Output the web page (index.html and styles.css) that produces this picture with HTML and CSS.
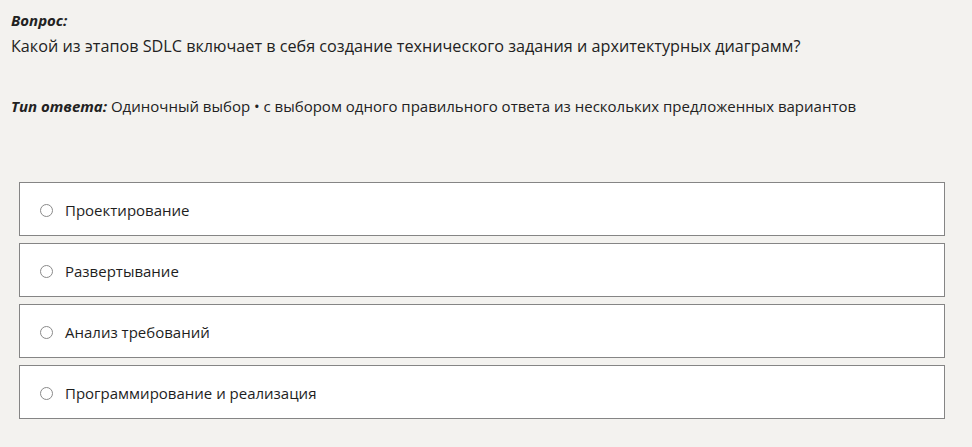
FILE: index.html
```html
<!DOCTYPE html>
<html lang="ru">
<head>
<meta charset="utf-8">
<title>Вопрос</title>
<link rel="stylesheet" href="styles.css">
</head>
<body>
<main class="page">
  <section class="question">
    <div class="q-label">Вопрос:</div>
    <div class="q-text">Какой из этапов SDLC включает в себя создание технического задания и архитектурных диаграмм?</div>
  </section>
  <div class="answer-type"><span class="at-label">Тип ответа:</span> Одиночный выбор • с выбором одного правильного ответа из нескольких предложенных вариантов</div>
  <div class="options">
    <label class="option"><span class="radio"></span><span class="opt-text">Проектирование</span></label>
    <label class="option"><span class="radio"></span><span class="opt-text">Развертывание</span></label>
    <label class="option"><span class="radio"></span><span class="opt-text">Анализ требований</span></label>
    <label class="option"><span class="radio"></span><span class="opt-text">Программирование и реализация</span></label>
  </div>
</main>
</body>
</html>
```

FILE: styles.css
```css
html, body {
  margin: 0;
  padding: 0;
  background: #f3f2ef;
}
body {
  font-family: "Open Sans", "Noto Sans", sans-serif;
  color: #222;
}
.page {
  padding: 9px 27px 0 11px;
}
.q-label {
  font-weight: 700;
  font-style: italic;
  font-size: 15px;
  line-height: 22px;
  color: #222;
}
.q-text {
  font-size: 16.2px;
  line-height: 24px;
  margin-top: 3px;
}
.answer-type {
  font-size: 15px;
  line-height: 22px;
  margin-top: 37px;
}
.at-label {
  font-weight: 700;
  font-style: italic;
}
.options {
  display: flex;
  flex-direction: column;
  gap: 7px;
  margin: 65px 0 0 8px;
}
.option {
  display: flex;
  align-items: center;
  height: 52px;
  background: #fff;
  border: 1px solid #858585;
  padding-left: 20px;
}
.radio {
  width: 13px;
  height: 13px;
  margin-top: 2px;
  border: 1px solid #8a8a8a;
  border-radius: 50%;
  background: #fff;
  box-sizing: border-box;
}
.opt-text {
  margin-left: 12px;
  margin-top: 2px;
  font-size: 15px;
  color: #1e1e1e;
}
```
